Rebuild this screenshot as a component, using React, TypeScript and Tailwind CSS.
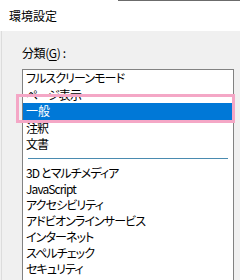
import React from "react";

const font = {
  fontFamily: '"Noto Sans CJK JP", "Noto Sans", sans-serif',
};

const top = ["フルスクリーンモード", "ページ表示", "一般", "注釈", "文書"];
const bottom = [
  "3D とマルチメディア",
  "JavaScript",
  "アクセシビリティ",
  "アドビオンラインサービス",
  "インターネット",
  "スペルチェック",
  "セキュリティ",
];

export default function App() {
  return (
    <div
      className="relative w-[240px] h-[280px] overflow-hidden bg-[#f0f0f0] text-[12px] text-black [font-feature-settings:'palt']"
      style={font}
    >
      <div className="h-[31px] bg-white flex items-center pl-[9px] leading-[13px]">
        環境設定
      </div>
      <div className="border-l border-[#dcdcdc] ml-px pl-[20px] pt-[15px]">
        <div className="leading-[13px] tracking-[-0.4px]">
          分類(<span className="underline underline-offset-2">G</span>) :
        </div>
        <div className="mt-[10px] w-[212px] h-[220px] border border-[#828282] bg-white tracking-[-0.9px]">
          <div className="flex flex-col">
            {top.map((t, i) => (
              <div
                key={t}
                className={
                  i === 2
                    ? "h-[16.5px] leading-[16.5px] pl-[3px] mr-px bg-[#0078d7] text-white tracking-[0px]"
                    : "h-[16.5px] leading-[16.5px] pl-[3px]"
                }
              >
                {t}
              </div>
            ))}
          </div>
          <div className="h-[12.5px] flex items-center px-[5px]">
            <div className="h-px w-full bg-[#4a8bb0]" />
          </div>
          <div className="flex flex-col">
            {bottom.map((t) => (
              <div key={t} className="h-[16px] leading-[16px] pl-[3px]">
                {t}
              </div>
            ))}
          </div>
        </div>
      </div>
      <div className="absolute top-0 left-[118px] right-0 h-px bg-[#6b6b6b]" />
      <div className="absolute left-[16px] top-[94px] w-[219px] h-[29px] border-[3px] border-[#f4a7c6]" />
    </div>
  );
}
